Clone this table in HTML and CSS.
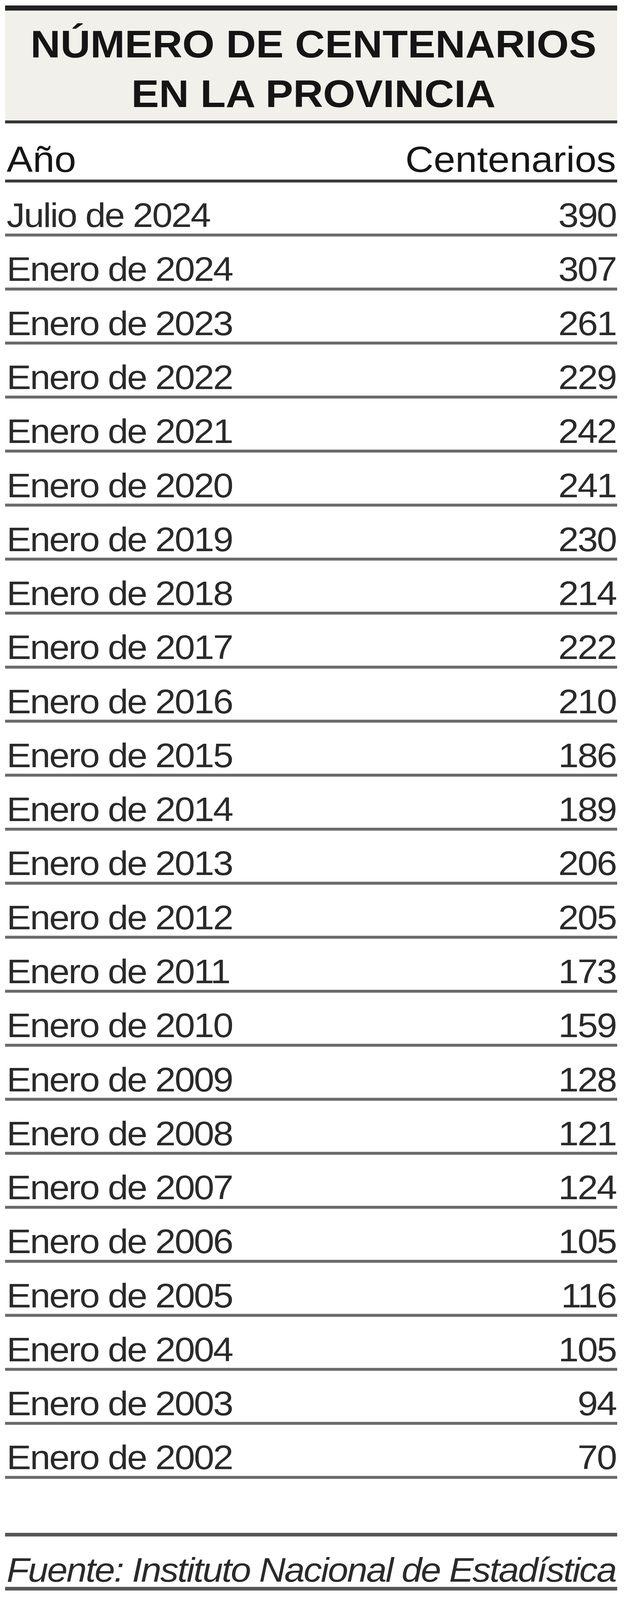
FILE: index.html
```html
<!DOCTYPE html>
<html lang="es">
<head>
<meta charset="utf-8">
<title>Número de centenarios en la provincia</title>
<link rel="stylesheet" href="styles.css">
</head>
<body>
<div class="wrap">
  <div class="title"><div class="tl">NÚMERO DE CENTENARIOS</div><div class="tl">EN LA PROVINCIA</div></div>
  <div class="head"><span class="cell">Año</span><span class="cell">Centenarios</span></div>
  <div class="row"><span class="cell">Julio de 2024</span><span class="cell">390</span></div>
  <div class="row"><span class="cell">Enero de 2024</span><span class="cell">307</span></div>
  <div class="row"><span class="cell">Enero de 2023</span><span class="cell">261</span></div>
  <div class="row"><span class="cell">Enero de 2022</span><span class="cell">229</span></div>
  <div class="row"><span class="cell">Enero de 2021</span><span class="cell">242</span></div>
  <div class="row"><span class="cell">Enero de 2020</span><span class="cell">241</span></div>
  <div class="row"><span class="cell">Enero de 2019</span><span class="cell">230</span></div>
  <div class="row"><span class="cell">Enero de 2018</span><span class="cell">214</span></div>
  <div class="row"><span class="cell">Enero de 2017</span><span class="cell">222</span></div>
  <div class="row"><span class="cell">Enero de 2016</span><span class="cell">210</span></div>
  <div class="row"><span class="cell">Enero de 2015</span><span class="cell">186</span></div>
  <div class="row"><span class="cell">Enero de 2014</span><span class="cell">189</span></div>
  <div class="row"><span class="cell">Enero de 2013</span><span class="cell">206</span></div>
  <div class="row"><span class="cell">Enero de 2012</span><span class="cell">205</span></div>
  <div class="row"><span class="cell">Enero de 2011</span><span class="cell">173</span></div>
  <div class="row"><span class="cell">Enero de 2010</span><span class="cell">159</span></div>
  <div class="row"><span class="cell">Enero de 2009</span><span class="cell">128</span></div>
  <div class="row"><span class="cell">Enero de 2008</span><span class="cell">121</span></div>
  <div class="row"><span class="cell">Enero de 2007</span><span class="cell">124</span></div>
  <div class="row"><span class="cell">Enero de 2006</span><span class="cell">105</span></div>
  <div class="row"><span class="cell">Enero de 2005</span><span class="cell">116</span></div>
  <div class="row"><span class="cell">Enero de 2004</span><span class="cell">105</span></div>
  <div class="row"><span class="cell">Enero de 2003</span><span class="cell">94</span></div>
  <div class="row"><span class="cell">Enero de 2002</span><span class="cell">70</span></div>
  <div class="spacer"></div>
  <div class="source"><span class="cell">Fuente: Instituto Nacional de Estadística</span></div>
</div>
</body>
</html>
```
FILE: styles.css
```css
html, body {
  margin: 0;
  padding: 0;
  background: #ffffff;
}

body {
  font-family: "Liberation Sans", Arial, sans-serif;
  color: #222222;
  height: 4096px;
  overflow: hidden;
}

/* The sheet is laid out at the reference's 1600x4384 proportions and
   compressed vertically to fit the 4096px tall viewport. */
.wrap {
  padding: 15px 0 0 13px;
  width: 1567px;
  transform: scaleY(0.9343);
  transform-origin: 0 0;
}

.title {
  box-sizing: border-box;
  height: 323px;
  border-top: 14px solid #222222;
  border-bottom: 8px solid #333333;
  background: #f1f0ea;
  padding: 23px 0 0 12px;
  text-align: center;
  font-weight: bold;
  font-size: 106px;
  color: #151515;
}

.tl {
  height: 136px;
  line-height: 136px;
  white-space: nowrap;
}

.cell {
  display: block;
  height: 94px;
  line-height: 94px;
  white-space: nowrap;
}

.head {
  box-sizing: border-box;
  height: 162px;
  display: flex;
  justify-content: space-between;
  align-items: flex-start;
  padding: 48px 3px 0 4px;
  border-bottom: 8px solid #3a3a3a;
  font-size: 100px;
  color: #161616;
}

.head .cell {
  height: 100px;
  line-height: 100px;
}

.row {
  box-sizing: border-box;
  height: 148px;
  display: flex;
  justify-content: space-between;
  align-items: flex-start;
  padding: 43px 3px 0 4px;
  border-bottom: 8px solid #6a6a6a;
  font-size: 94px;
  letter-spacing: -3px;
  color: #2a2a2a;
}

.spacer {
  height: 148px;
}

.source {
  box-sizing: border-box;
  height: 158px;
  border-top: 10px solid #555555;
  border-bottom: 10px solid #555555;
  padding: 45px 0 0 4px;
  font-size: 94px;
  font-style: italic;
  letter-spacing: -3px;
  color: #2a2a2a;
}
```
